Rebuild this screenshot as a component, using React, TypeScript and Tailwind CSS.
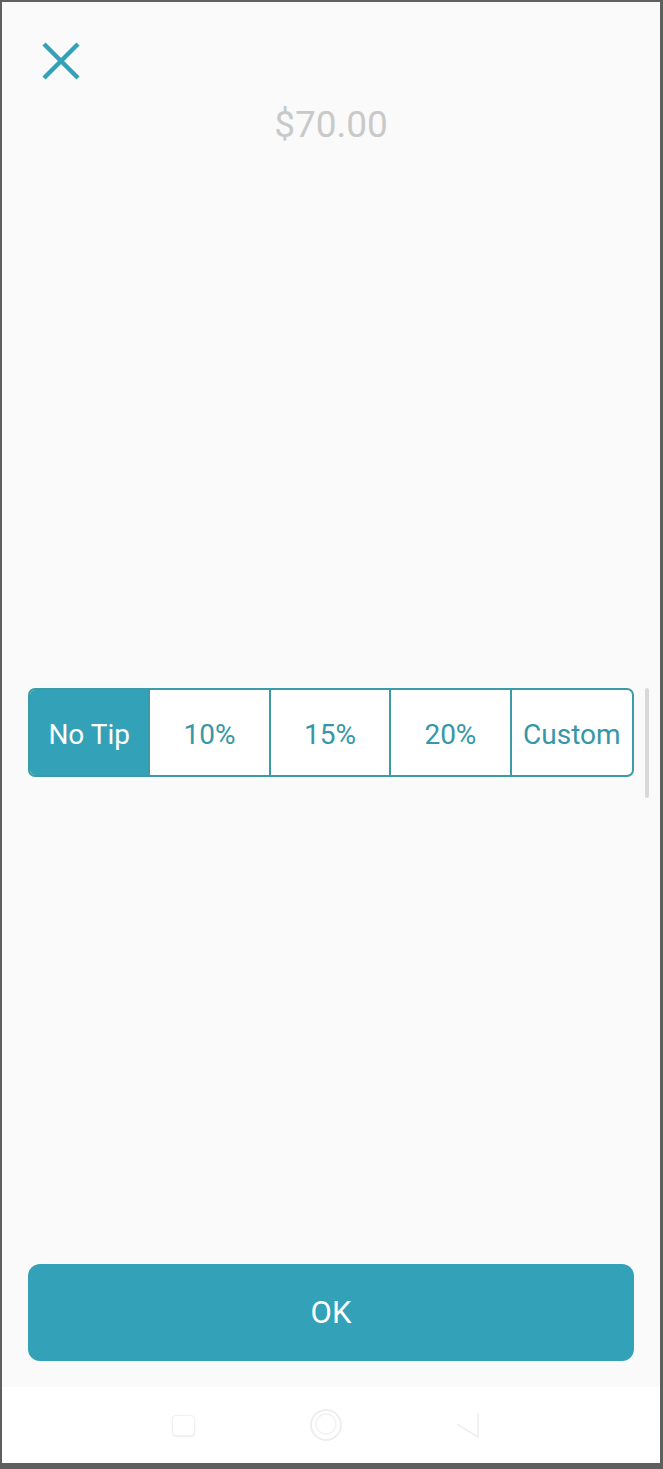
const tips = ["No Tip", "10%", "15%", "20%", "Custom"];

function CloseIcon() {
  return (
    <svg width="38" height="38" viewBox="0 0 38 38" fill="none">
      <path d="M2 2 L36 36 M36 2 L2 36" stroke="#33a1b8" strokeWidth="4.5" />
    </svg>
  );
}

function NavBar() {
  return (
    <div className="flex h-[76px] items-center bg-white">
      <div className="ml-[170px] h-[21px] w-[23px] rounded-[4px] border border-[#f0f0f0] bg-white shadow-[0_1px_2px_rgba(0,0,0,0.08)]" />
      <svg className="ml-[114px]" width="34" height="34" viewBox="0 0 34 34" fill="none">
        <circle cx="17" cy="17" r="15" stroke="#eeeeee" strokeWidth="2" />
        <circle cx="17" cy="16" r="10" stroke="#f3f3f3" strokeWidth="1.5" />
      </svg>
      <svg className="ml-[112px]" width="26" height="28" viewBox="0 0 26 28" fill="none">
        <path d="M23 2 L23 26 L2 13" stroke="#efefef" strokeWidth="1.5" strokeLinejoin="round" />
      </svg>
    </div>
  );
}

export default function App() {
  return (
    <div className="relative flex h-[1469px] w-[663px] flex-col border-t-2 border-r-[3px] border-b-[6px] border-l-2 border-[#5f5f5f] bg-[#fafafa] font-['Roboto',sans-serif]">
      <div className="flex flex-1 flex-col px-[26px]">
        <div className="mt-[40px] pl-[14px]">
          <CloseIcon />
        </div>
        <p className="mt-[24px] text-center text-[37px] leading-[42px] text-[#c9c9c9]">$70.00</p>

        <div className="mt-[542px] grid h-[89px] grid-cols-5 divide-x-2 divide-[#3c9ba6] overflow-hidden rounded-[7px] border-2 border-[#3c9ba6] bg-white">
          {tips.map((tip, i) => (
            <div
              key={tip}
              className={
                i === 0
                  ? "flex items-center justify-center bg-[#33a1b8] pt-[5px] text-[28px] text-white"
                  : "flex items-center justify-center pt-[5px] text-[28px] text-[#3797a6]"
              }
            >
              {tip}
            </div>
          ))}
        </div>

        <div className="flex-1" />

        <button className="mb-[26px] h-[97px] rounded-[12px] bg-[#33a1b8] pt-[2px] text-[31px] text-white">OK</button>
      </div>
      <NavBar />

      <div className="absolute top-[686px] left-[643px] h-[110px] w-[4px] rounded-full bg-[#d8d8d8]" />
    </div>
  );
}
